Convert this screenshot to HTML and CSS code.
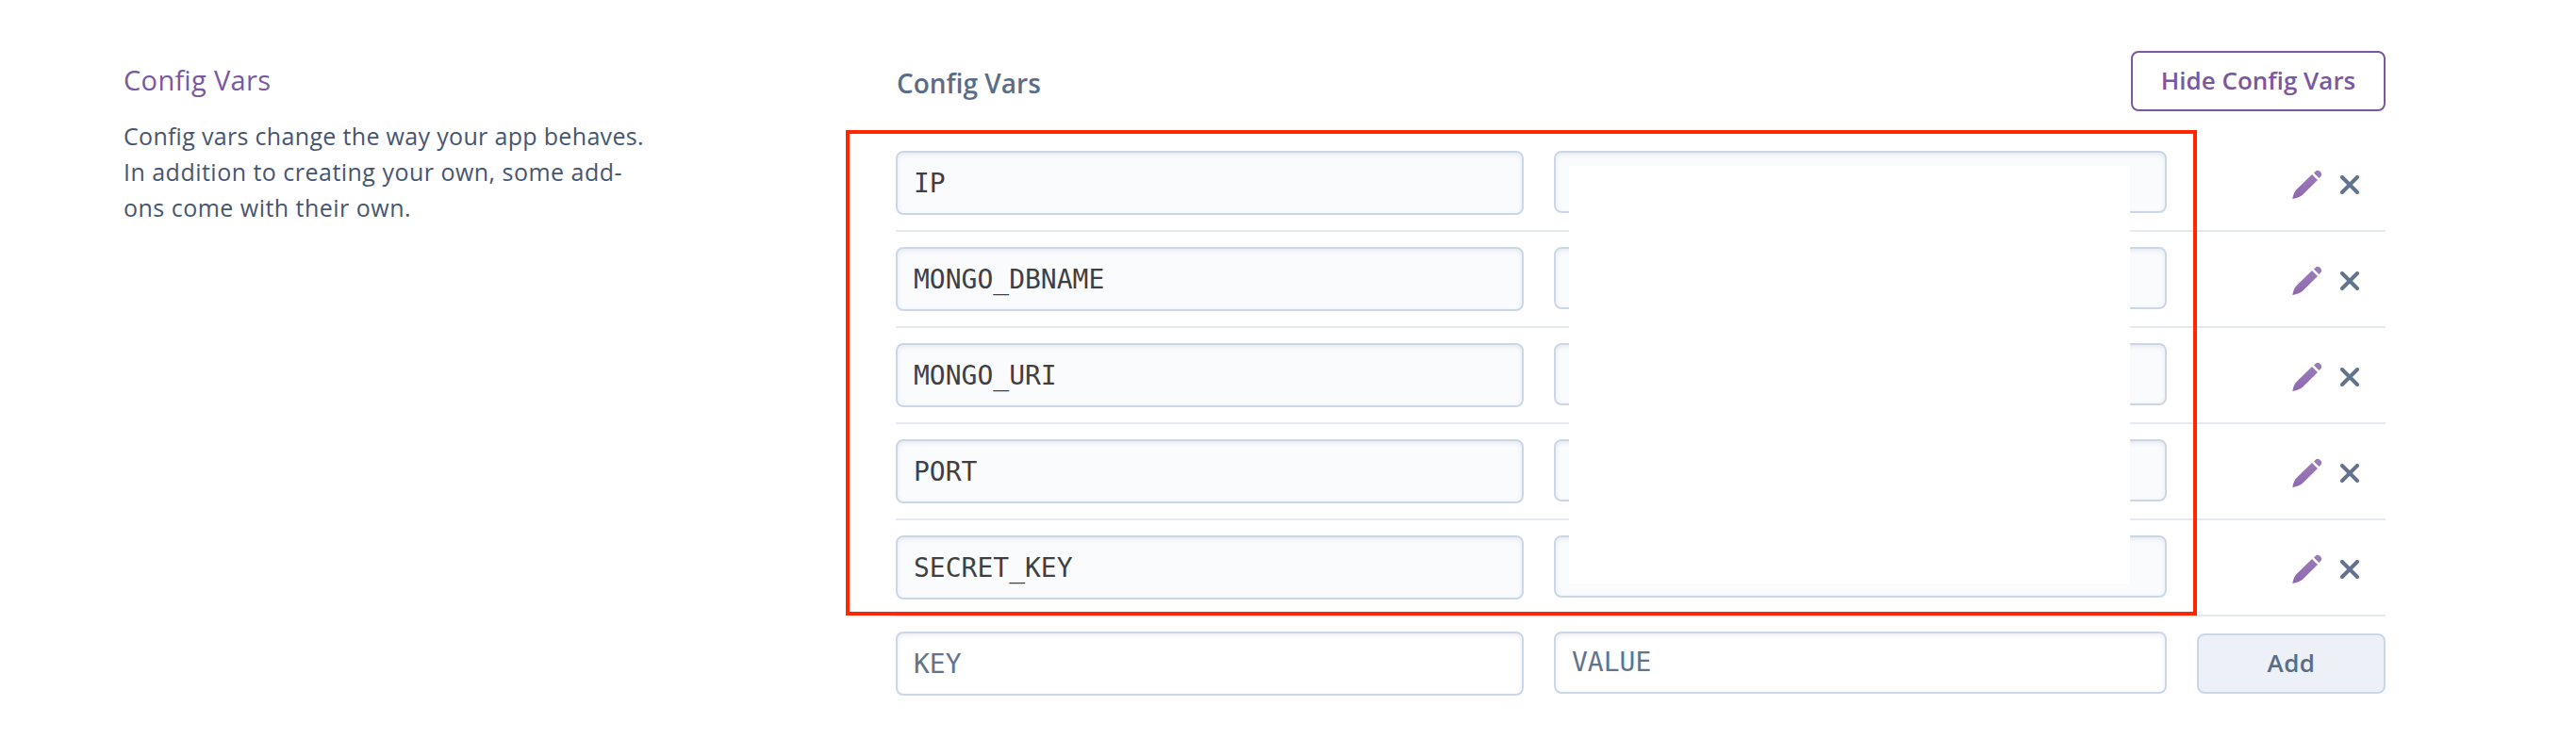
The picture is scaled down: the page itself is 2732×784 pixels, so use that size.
FILE: index.html
```html
<!DOCTYPE html>
<html lang="en">
<head>
<meta charset="utf-8">
<title>Config Vars</title>
<link rel="stylesheet" href="styles.css">
</head>
<body>
<svg width="0" height="0" class="defs">
  <defs>
    <linearGradient id="pencil-fill" x1="0" y1="0" x2="0" y2="1">
      <stop offset="0" stop-color="#9b7dba"/>
      <stop offset="1" stop-color="#8f68b0"/>
    </linearGradient>
    <symbol id="edit" viewBox="0 0 32 32">
      <path fill="url(#pencil-fill)" d="M21 4.9 27 10.9 11 26.7 Q8 29.6 .3 31 Q1.5 24 4.4 21.2ZM23 3.4 25 1.4Q26.6 .1 28.8 1.3L30.6 3.1Q31.9 5.2 30.5 7.1L28.5 9Z"/>
    </symbol>
    <symbol id="remove" viewBox="0 0 20 20">
      <path d="M2 2 18 18M18 2 2 18" fill="none" stroke="#62738d" stroke-width="4" stroke-linecap="round"/>
    </symbol>
  </defs>
</svg>
<main class="settings">
  <aside class="intro">
    <h2 class="intro-title">Config Vars</h2>
    <p class="intro-text"><span class="line line-tight">Config vars change the way your app behaves.</span> <span class="line">In addition to creating your own, some add-</span> <span class="line">ons come with their own.</span></p>
  </aside>
  <section class="panel">
    <header class="panel-head">
      <h3 class="panel-title">Config Vars</h3>
      <button class="btn btn-outline"><span class="btn-label">Hide Config Vars</span></button>
    </header>
    <div class="vars">
      <div class="row"><div class="field key">IP</div><div class="field value"></div><div class="actions"><svg class="edit"><use href="#edit"/></svg><svg class="remove"><use href="#remove"/></svg></div></div>
      <div class="row"><div class="field key">MONGO_DBNAME</div><div class="field value"></div><div class="actions"><svg class="edit"><use href="#edit"/></svg><svg class="remove"><use href="#remove"/></svg></div></div>
      <div class="row"><div class="field key">MONGO_URI</div><div class="field value"></div><div class="actions"><svg class="edit"><use href="#edit"/></svg><svg class="remove"><use href="#remove"/></svg></div></div>
      <div class="row"><div class="field key">PORT</div><div class="field value"></div><div class="actions"><svg class="edit"><use href="#edit"/></svg><svg class="remove"><use href="#remove"/></svg></div></div>
      <div class="row"><div class="field key">SECRET_KEY</div><div class="field value"></div><div class="actions"><svg class="edit"><use href="#edit"/></svg><svg class="remove"><use href="#remove"/></svg></div></div>
      <div class="row row-new"><div class="field key">KEY</div><div class="field value">VALUE</div><button class="btn btn-add"><span class="btn-label">Add</span></button></div>
      <div class="redaction"></div>
      <div class="highlight"></div>
    </div>
  </section>
</main>
</body>
</html>
```

FILE: styles.css
```css
* { box-sizing: border-box; }
body {
  margin: 0;
  background: #fff;
  font-family: "Open Sans", "Noto Sans", sans-serif;
  font-feature-settings: "liga" 1;
}
h2, h3, p { margin: 0; }
.defs { position: absolute; }
.settings {
  display: grid;
  grid-template-columns: 819px 1580px;
  padding: 54px 0 0 131px;
  height: 784px;
}
.intro { padding-top: 10px; }
.intro-title {
  color: #79589f;
  font-size: 29px;
  font-weight: 400;
  line-height: 42px;
  letter-spacing: .35px;
  white-space: nowrap;
}
.intro-text {
  margin-top: 19px;
  color: #475670;
  font-size: 25px;
  line-height: 38px;
  white-space: nowrap;
}
.line { display: block; letter-spacing: .48px; }
.line-tight { letter-spacing: .33px; }
.panel-head {
  display: flex;
  justify-content: space-between;
  height: 90px;
}
.panel-title {
  padding: 13px 0 0 1px;
  color: #5a6d87;
  font-size: 28px;
  font-weight: 600;
  line-height: 42px;
}
.btn {
  height: 64px;
  padding: 0 0 2px;
  border: 2px solid;
  border-radius: 8px;
  font: 600 26px/36px "Open Sans", "Noto Sans", sans-serif;
  white-space: nowrap;
}
.btn-outline { width: 270px; border-color: #79589f; background: #fff; color: #79589f; }
.btn-add { width: 200px; margin-top: 2px; border-color: #cbd6e6; background: #edf0f6; color: #5a6d87; letter-spacing: .4px; }
.vars { position: relative; }
.row {
  display: grid;
  grid-template-columns: 666px 650px 200px;
  column-gap: 32px;
  align-items: start;
  height: 102px;
  padding-top: 16px;
  border-bottom: 2px solid #e5eaf2;
}
.row-new { border-bottom: 0; }
.field {
  height: 66px;
  padding: 0 17px;
  border: 2px solid #cbd6e6;
  border-radius: 8px;
  background: #fafbfd;
  box-shadow: inset 0 2px 5px rgba(62, 81, 130, .11);
  color: #3f3f44;
  font: 28px/62px "DejaVu Sans Mono", monospace;
}
.field.key { height: 68px; line-height: 66px; }
.row-new .field { background: #fff; color: #62738d; }
.actions {
  display: flex;
  align-items: center;
  height: 71px;
  padding-left: 101px;
}
.edit { width: 32px; height: 32px; }
.remove { width: 20px; height: 20px; margin-left: 19px; }
.redaction {
  position: absolute;
  left: 714px;
  top: 32px;
  width: 595px;
  height: 443px;
  background: #fff;
}
.highlight {
  position: absolute;
  left: -53px;
  top: -6px;
  width: 1433px;
  height: 515px;
  border: 4px solid #ff2600;
}
```
